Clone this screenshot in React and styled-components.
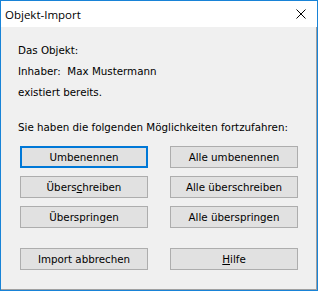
import React from "react";
import styled, { createGlobalStyle } from "styled-components";

const Global = createGlobalStyle`
  html, body { margin: 0; padding: 0; background: #ffffff; }
  #root { width: 318px; height: 291px; }
`;

const Window = styled.div`
  box-sizing: border-box;
  width: 318px;
  height: 291px;
  border: 1px solid #1883d7;
  display: flex;
  flex-direction: column;
  font-family: Tahoma, "DejaVu Sans", "Liberation Sans", sans-serif;
  font-size: 10.3px;
  color: #000;
`;

const TitleBar = styled.div`
  height: 26px;
  background: #ffffff;
  display: flex;
  align-items: center;
  justify-content: space-between;
  padding-left: 4px;
  flex-shrink: 0;
`;

const Title = styled.span`
  font-family: "Segoe UI", "Open Sans", "Liberation Sans", sans-serif;
  font-size: 11.5px;
  color: #000;
`;

const CloseBox = styled.div`
  width: 32px;
  height: 26px;
  display: flex;
  align-items: center;
  justify-content: center;
`;

const Content = styled.div`
  flex: 1;
  background: #f0f0f0;
  border-right: 1px solid #a0a0a0;
  border-bottom: 1px solid #a0a0a0;
  padding: 13px 0 0 17px;
  display: flex;
  flex-direction: column;
`;

const Line = styled.div`
  height: 21px;
  line-height: 21px;
  white-space: pre;
`;

const Prompt = styled(Line)`
  margin-top: 14px;
`;

const Grid = styled.div`
  display: grid;
  grid-template-columns: 128px 128px;
  column-gap: 22px;
  row-gap: 8px;
  margin-top: 8px;
  margin-left: 2px;
`;

const Spacer = styled.div`
  grid-column: span 2;
  height: 4px;
`;

const Button = styled.button`
  box-sizing: border-box;
  height: 22px;
  background: #e1e1e1;
  border: ${(p) => (p.$focused ? "2px solid #0078d7" : "1px solid #adadad")};
  font-family: inherit;
  font-size: inherit;
  color: #000;
  padding: 0;
  margin: 0;
  display: flex;
  align-items: center;
  justify-content: center;
  white-space: pre;
`;

const U = styled.span`
  text-decoration: underline;
`;

export default function App() {
  return (
    <>
      <Global />
      <Window>
        <TitleBar>
          <Title>Objekt-Import</Title>
          <CloseBox>
            <svg width="10" height="10" viewBox="0 0 10 10">
              <path d="M0.5 0.5 L9.5 9.5 M9.5 0.5 L0.5 9.5" stroke="#000" strokeWidth="1" fill="none" />
            </svg>
          </CloseBox>
        </TitleBar>
        <Content>
          <Line>Das Objekt:</Line>
          <Line>{"Inhaber:  Max Mustermann"}</Line>
          <Line>existiert bereits.</Line>
          <Prompt>Sie haben die folgenden Möglichkeiten fortzufahren:</Prompt>
          <Grid>
            <Button $focused>Umbenennen</Button>
            <Button>Alle umbenennen</Button>
            <Button>
              Übers<U>c</U>hreiben
            </Button>
            <Button>Alle überschreiben</Button>
            <Button>Überspringen</Button>
            <Button>Alle überspringen</Button>
            <Spacer />
            <Button>Import abbrechen</Button>
            <Button>
              <U>H</U>ilfe
            </Button>
          </Grid>
        </Content>
      </Window>
    </>
  );
}
